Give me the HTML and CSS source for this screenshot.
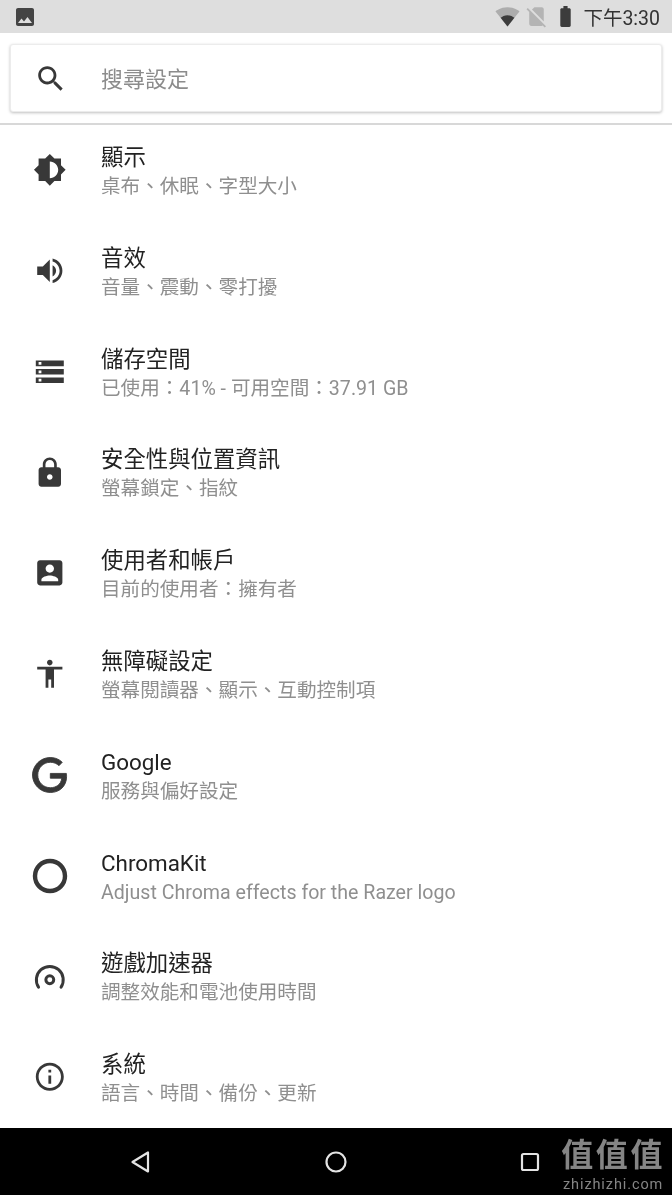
FILE: index.html
```html
<!DOCTYPE html>
<html lang="zh-Hant">
<head>
	<meta charset="UTF-8">
	<title>設定</title>
	<link rel="stylesheet" href="styles.css">
</head>
<body>

<div id="app">
	<div class="status_bar">
		<svg class="status_pic" viewBox="0 0 24 24"><path d="M21 19V5c0-1.1-.9-2-2-2H5c-1.1 0-2 .9-2 2v14c0 1.1.9 2 2 2h14c1.1 0 2-.9 2-2zM8.5 13.5l2.5 3.01L14.5 12l4.5 6H5l3.5-4.5z"/></svg>
		<div class="status_right">
			<svg class="status_icon" viewBox="0 0 24 24"><path opacity=".3" d="M12.01 21.49L23.64 7c-.45-.34-4.93-4-11.64-4C5.28 3 .81 6.66.36 7l11.63 14.49.01.01.01-.01z"/><path d="M12 21.5l6.6-8.2C17.1 12.1 14.9 10.8 12 10.8s-5.1 1.3-6.6 2.5z"/></svg>
			<svg class="status_icon status_faint" viewBox="0 0 24 24"><path d="M18.99 5c0-1.1-.89-2-1.99-2h-7L7.66 5.34 19 16.68 18.99 5zM3.65 3.88L2.38 5.15 5 7.77V19c0 1.1.9 2 2 2h10.01c.35 0 .67-.1.96-.26l1.88 1.88 1.27-1.27L3.65 3.88z"/></svg>
			<svg class="status_icon" viewBox="0 0 24 24"><path d="M15.67 4H14V2h-4v2H8.33C7.6 4 7 4.6 7 5.33v15.33C7 21.4 7.6 22 8.33 22h7.33c.74 0 1.34-.6 1.34-1.33V5.33C17 4.6 16.4 4 15.67 4z"/></svg>
			<span class="status_time">下午3:30</span>
		</div>
	</div>

	<div class="search_wrap">
		<div class="search_box">
			<div class="icon_col search_icon">
				<svg class="icon" viewBox="0 0 24 24"><path d="M15.5 14h-.79l-.28-.27C15.41 12.59 16 11.11 16 9.5 16 5.91 13.09 3 9.5 3S3 5.91 3 9.5 5.91 16 9.5 16c1.61 0 3.09-.59 4.23-1.57l.27.28v.79l5 4.99L20.49 19l-4.99-5zm-6 0C7.01 14 5 11.99 5 9.5S7.01 5 9.5 5 14 7.01 14 9.5 11.99 14 9.5 14z"/></svg>
			</div>
			<span class="search_text">搜尋設定</span>
		</div>
	</div>

	<div class="list">
		<div class="row">
			<div class="icon_col"><svg class="icon" viewBox="0 0 24 24"><path d="M20 15.31L23.31 12 20 8.69V4h-4.69L12 .69 8.69 4H4v4.69L.69 12 4 15.31V20h4.69L12 23.31 15.31 20H20v-4.69zM12 18V6c3.31 0 6 2.69 6 6s-2.69 6-6 6z"/></svg></div>
			<div class="row_text"><div class="title">顯示</div><div class="sub">桌布、休眠、字型大小</div></div>
		</div>
		<div class="row">
			<div class="icon_col"><svg class="icon" viewBox="0 0 24 24"><path d="M3 9v6h4l5 5V4L7 9H3zm13.5 3c0-1.77-1.02-3.29-2.5-4.03v8.05c1.48-.73 2.5-2.25 2.5-4.02zM14 3.23v2.06c2.89.86 5 3.54 5 6.71s-2.11 5.85-5 6.71v2.06c4.01-.91 7-4.49 7-8.77s-2.99-7.86-7-8.77z"/></svg></div>
			<div class="row_text"><div class="title">音效</div><div class="sub">音量、震動、零打擾</div></div>
		</div>
		<div class="row">
			<div class="icon_col"><svg class="icon" viewBox="0 0 24 24"><path d="M2 20h20v-4H2v4zm2-3h2v2H4v-2zM2 4v4h20V4H2zm4 3H4V5h2v2zm-4 7h20v-4H2v4zm2-3h2v2H4v-2z"/></svg></div>
			<div class="row_text"><div class="title">儲存空間</div><div class="sub">已使用：41% - 可用空間：37.91 GB</div></div>
		</div>
		<div class="row">
			<div class="icon_col"><svg class="icon" viewBox="0 0 24 24"><path d="M18 8h-1V6c0-2.76-2.24-5-5-5S7 3.24 7 6v2H6c-1.1 0-2 .9-2 2v10c0 1.1.9 2 2 2h12c1.1 0 2-.9 2-2V10c0-1.1-.9-2-2-2zm-6 9c-1.1 0-2-.9-2-2s.9-2 2-2 2 .9 2 2-.9 2-2 2zm3.1-9H8.9V6c0-1.71 1.39-3.1 3.1-3.1 1.71 0 3.1 1.39 3.1 3.1v2z"/></svg></div>
			<div class="row_text"><div class="title">安全性與位置資訊</div><div class="sub">螢幕鎖定、指紋</div></div>
		</div>
		<div class="row">
			<div class="icon_col"><svg class="icon" viewBox="0 0 24 24"><path d="M3 5v14c0 1.1.89 2 2 2h14c1.1 0 2-.9 2-2V5c0-1.1-.9-2-2-2H5c-1.11 0-2 .9-2 2zm12 4c0 1.66-1.34 3-3 3s-3-1.34-3-3 1.34-3 3-3 3 1.34 3 3zm-9 8c0-2 4-3.1 6-3.1s6 1.1 6 3.1v1H6v-1z"/></svg></div>
			<div class="row_text"><div class="title">使用者和帳戶</div><div class="sub">目前的使用者：擁有者</div></div>
		</div>
		<div class="row">
			<div class="icon_col"><svg class="icon" viewBox="0 0 24 24"><path d="M12 2c1.1 0 2 .9 2 2s-.9 2-2 2-2-.9-2-2 .9-2 2-2zm9 7h-6v13h-2v-6h-2v6H9V9H3V7h18v2z"/></svg></div>
			<div class="row_text"><div class="title">無障礙設定</div><div class="sub">螢幕閱讀器、顯示、互動控制項</div></div>
		</div>
		<div class="row">
			<div class="icon_col"><svg class="icon icon_big icon_bold" viewBox="0 0 24 24"><path d="M21.35 11.1h-9.17v2.73h6.51c-.33 3.81-3.5 5.44-6.5 5.44C8.36 19.27 5 16.25 5 12c0-4.1 3.2-7.27 7.2-7.27 3.09 0 4.9 1.97 4.9 1.97L19 4.72S16.56 2 12.1 2C6.42 2 2 6.8 2 12c0 5.05 4.13 10 10.22 10 5.35 0 9.25-3.67 9.25-9.09 0-1.15-.12-1.81-.12-1.81z"/></svg></div>
			<div class="row_text"><div class="title">Google</div><div class="sub">服務與偏好設定</div></div>
		</div>
		<div class="row">
			<div class="icon_col"><svg class="icon icon_big" viewBox="0 0 42 42"><circle cx="21" cy="21" r="15" fill="none" stroke="#383838" stroke-width="4.4"/></svg></div>
			<div class="row_text"><div class="title">ChromaKit</div><div class="sub">Adjust Chroma effects for the Razer logo</div></div>
		</div>
		<div class="row">
			<div class="icon_col"><svg class="icon" viewBox="0 0 34 34"><path d="M5.600 27.500A13.600 13.600 0 1 1 28.400 27.500" fill="none" stroke="#383838" stroke-width="3" stroke-linecap="round"/><circle cx="17" cy="20" r="4" fill="none" stroke="#383838" stroke-width="3"/></svg></div>
			<div class="row_text"><div class="title">遊戲加速器</div><div class="sub">調整效能和電池使用時間</div></div>
		</div>
		<div class="row">
			<div class="icon_col"><svg class="icon" viewBox="0 0 24 24"><path d="M11 7h2v2h-2zm0 4h2v6h-2zm1-9C6.48 2 2 6.48 2 12s4.48 10 10 10 10-4.48 10-10S17.52 2 12 2zm0 18c-4.41 0-8-3.59-8-8s3.59-8 8-8 8 3.59 8 8-3.59 8-8 8z"/></svg></div>
			<div class="row_text"><div class="title">系統</div><div class="sub">語言、時間、備份、更新</div></div>
		</div>
	</div>

	<div class="nav_bar">
		<svg class="nav_icon" viewBox="0 0 24 24"><path d="M19 2.500V21.500L3.500 12z"/></svg>
		<svg class="nav_icon" viewBox="0 0 24 24"><circle cx="12" cy="12" r="9.500"/></svg>
		<svg class="nav_icon" viewBox="0 0 24 24"><rect x="4" y="4" width="16" height="16" rx="1.500"/></svg>
		<div class="watermark">
			<div class="wm_big">值值值</div>
			<div class="wm_small">zhizhizhi.com</div>
		</div>
	</div>
</div>

</body>
</html>
```

FILE: styles.css
```css
html, body {
	margin: 0;
	padding: 0;
	background-color: #fff;
}

#app {
	width: 672px;
	height: 1195px;
	display: flex;
	flex-direction: column;
	overflow: hidden;
	font-family: Roboto, "Noto Sans CJK TC", sans-serif;
	filter: blur(0.7px);
}

.status_bar {
	height: 33px;
	flex: none;
	display: flex;
	align-items: center;
	justify-content: space-between;
	padding: 0 12px 0 13px;
	background-color: #dedede;
}

.status_pic {
	width: 24px;
	height: 24px;
	fill: #444;
}

.status_right {
	display: flex;
	align-items: center;
	gap: 4px;
}

.status_icon {
	width: 25px;
	height: 25px;
	fill: #3c3c3c;
}

.status_faint {
	opacity: 0.25;
}

.status_time {
	margin-left: 1px;
	font-size: 19.5px;
	color: #333;
}

.search_wrap {
	height: 92px;
	flex: none;
	box-sizing: border-box;
	padding: 11px 10px 0;
	border-bottom: 2px solid #d8d8d8;
}

.search_box {
	height: 68px;
	box-sizing: border-box;
	display: flex;
	align-items: center;
	background-color: #fff;
	border: 1px solid #ececec;
	border-radius: 3px;
	box-shadow: 0 1px 3px rgba(0, 0, 0, 0.25);
}

.search_box .search_icon {
	width: 80px;
	margin-top: 2px;
}

.search_text {
	margin-left: 10px;
	margin-bottom: 2px;
	font-size: 22px;
	color: #8c8c8c;
}

.list {
	flex: 1;
	overflow: hidden;
}

.row {
	height: 100.8px;
	box-sizing: border-box;
	padding-bottom: 10.8px;
	display: flex;
	align-items: center;
}

.icon_col {
	width: 100px;
	flex: none;
	display: flex;
	justify-content: center;
}

.icon {
	width: 33.6px;
	height: 33.6px;
	fill: #383838;
}

.icon_big {
	width: 42px;
	height: 42px;
	margin: -4px 0;
}

.icon_bold {
	stroke: #383838;
	stroke-width: 0.5;
}

.row_text {
	margin-left: 1px;
	padding-top: 4px;
}

.title {
	font-size: 22.4px;
	line-height: 28px;
	color: #222;
}

.sub {
	margin-top: 2px;
	font-size: 19.6px;
	line-height: 28px;
	color: #8f8f8f;
}

.nav_bar {
	height: 67px;
	flex: none;
	position: relative;
	display: flex;
	align-items: center;
	justify-content: space-between;
	padding: 0 130px 0 129px;
	background-color: #000;
}

.nav_icon {
	width: 24px;
	height: 24px;
	fill: none;
	stroke: #e4e4e4;
	stroke-width: 2.2;
	stroke-linejoin: round;
}

.watermark {
	position: absolute;
	right: 7px;
	top: 1px;
	text-align: center;
	color: #858585;
}

.wm_big {
	font-size: 32px;
	line-height: 47px;
	letter-spacing: 2.6px;
	font-weight: bold;
	font-family: "Noto Sans CJK TC", sans-serif;
}

.wm_small {
	font-size: 14.5px;
	line-height: 17px;
	letter-spacing: 0.9px;
}
```
